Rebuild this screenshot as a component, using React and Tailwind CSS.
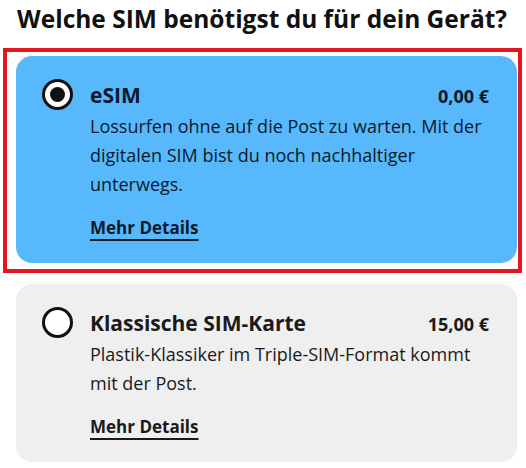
import React, { useState } from 'react';

const options = [
  {
    id: 'esim',
    title: 'eSIM',
    price: '0,00 €',
    text: 'Lossurfen ohne auf die Post zu warten. Mit der digitalen SIM bist du noch nachhaltiger unterwegs.',
  },
  {
    id: 'sim',
    title: 'Klassische SIM-Karte',
    price: '15,00 €',
    text: 'Plastik-Klassiker im Triple-SIM-Format kommt mit der Post.',
  },
];

const Radio = ({ checked }) => (
  <span className="mt-[-4px] flex h-[31px] w-[31px] shrink-0 items-center justify-center rounded-full border-[3px] border-[#111] bg-white">
    {checked && <span className="h-[15px] w-[15px] rounded-full bg-[#111]" />}
  </span>
);

const OptionCard = ({ option, selected, onSelect }) => (
  <div
    onClick={onSelect}
    className={`relative flex cursor-pointer gap-[17px] rounded-[16px] pb-[23px] pl-[26px] pr-[28px] pt-[27px] ${
      selected ? 'bg-[#57b9fc] text-[#0a1a2a]' : 'bg-[#efefef] text-[#1a1a1a]'
    }`}
  >
    {/* red outline around the chosen option */}
    {selected && (
      <div className="pointer-events-none absolute -bottom-[10px] -left-[13px] -right-[5px] -top-[8px] border-4 border-[#e3161f]" />
    )}
    <Radio checked={selected} />
    <div className="flex-1">
      <div className="flex items-baseline justify-between font-bold leading-[24px]">
        <span className="text-[21px]">{option.title}</span>
        <span className="text-[18px]">{option.price}</span>
      </div>
      <p className="mt-[4px] pr-[6px] text-[18px] leading-[29px]">{option.text}</p>
      <a className="mt-[17px] inline-block text-[17px] font-bold leading-[24px] underline decoration-2 underline-offset-[5px]">
        Mehr Details
      </a>
    </div>
  </div>
);

export default function App() {
  const [selected, setSelected] = useState('esim');

  return (
    <div className="min-h-screen bg-white font-['Open_Sans',sans-serif]">
      <h1 className="whitespace-nowrap pl-[17px] pt-[3px] text-[24.5px] font-bold leading-[32px] text-[#111]">
        Welche SIM benötigst du für dein Gerät?
      </h1>
      <div className="mt-[21px] flex w-[517px] flex-col gap-[21px] pl-[16px]">
        {options.map((o) => (
          <OptionCard key={o.id} option={o} selected={selected === o.id} onSelect={() => setSelected(o.id)} />
        ))}
      </div>
    </div>
  );
}
